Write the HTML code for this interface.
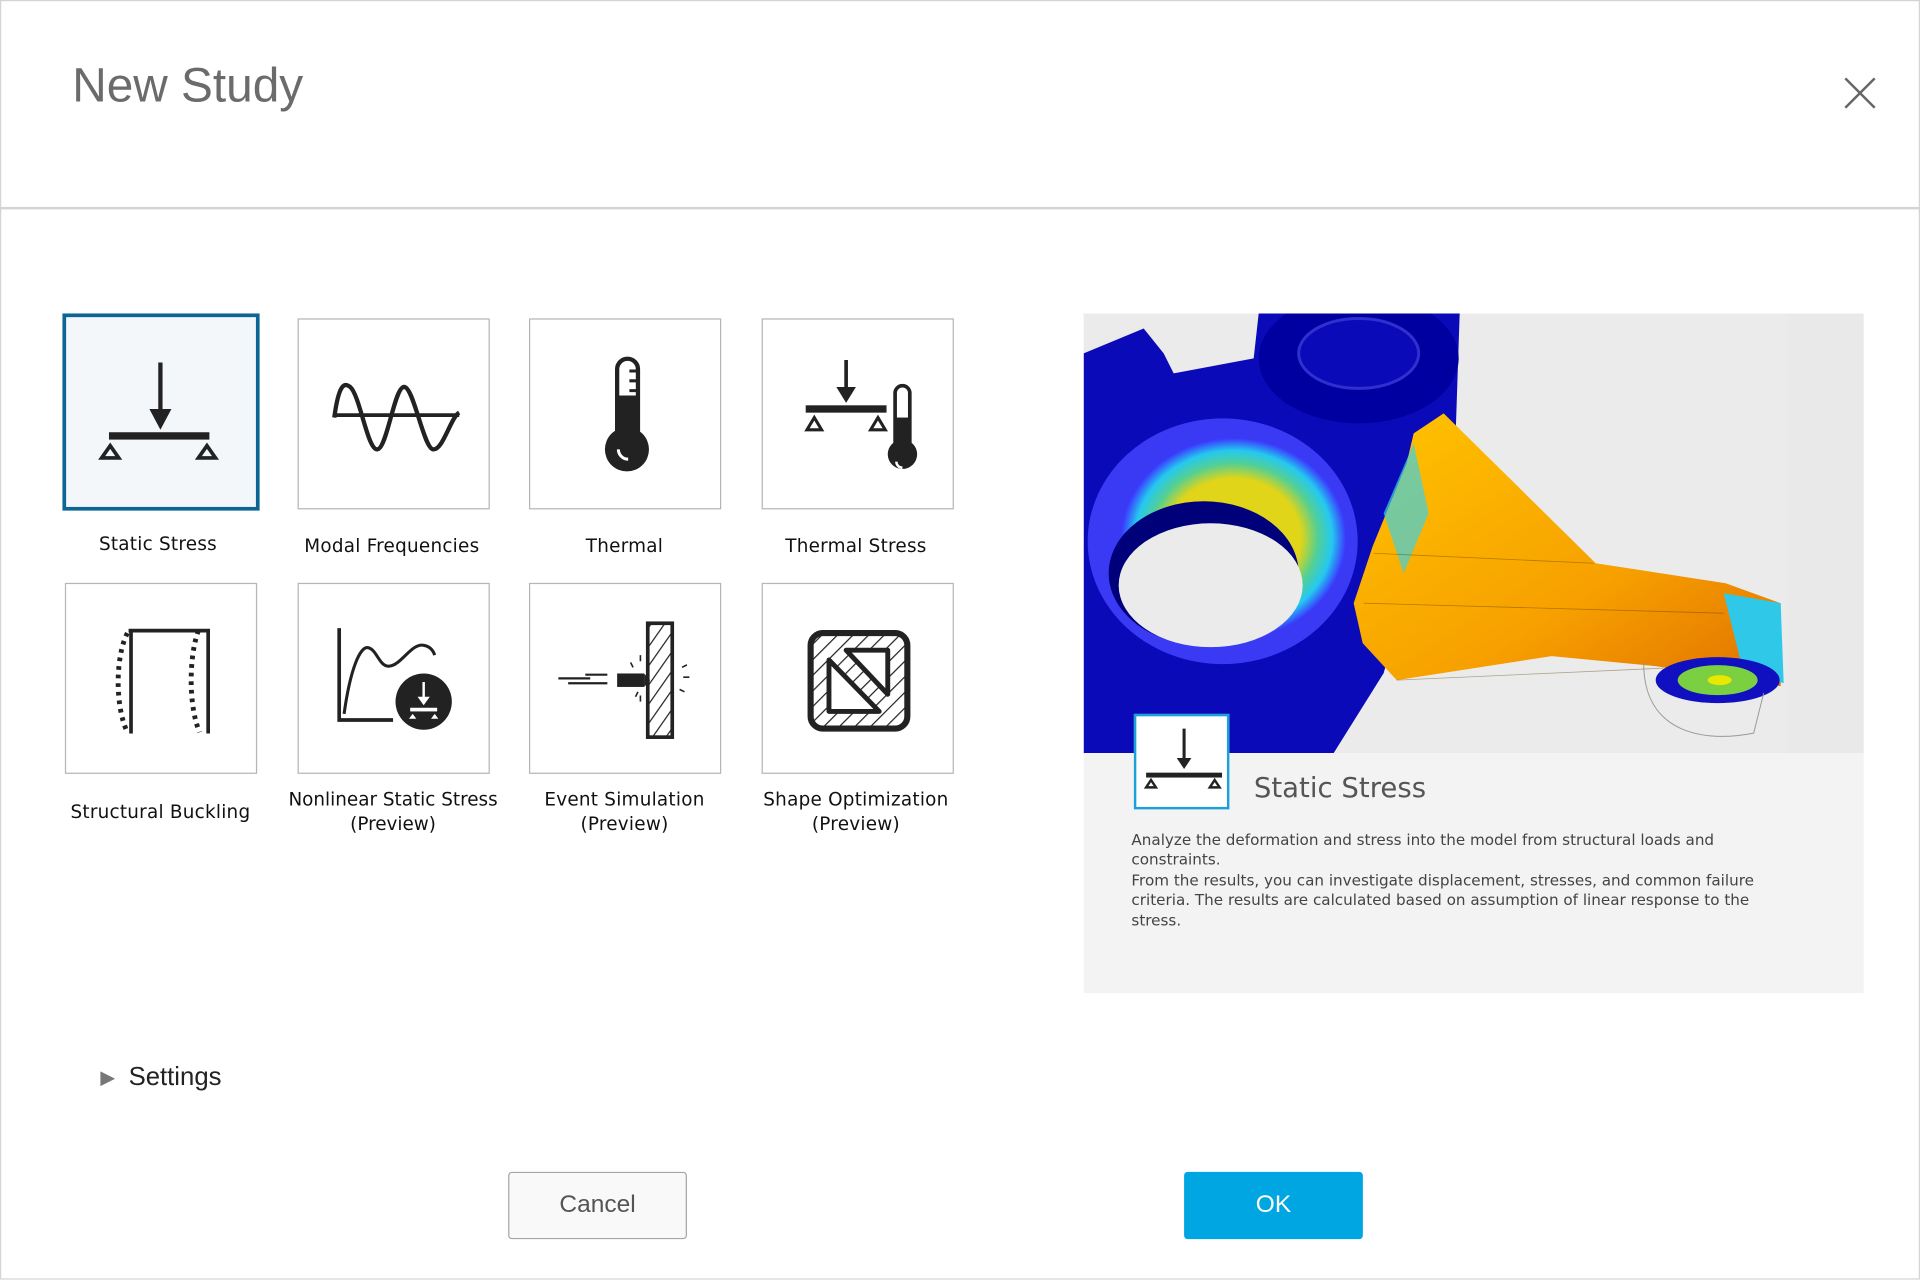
<!DOCTYPE html>
<html><head><meta charset="utf-8"><style>
html,body{margin:0;padding:0;background:#fff;overflow:hidden}
#root{position:absolute;left:0;top:0;width:1568px;height:1045px;transform:scale(1.22449);transform-origin:0 0;font-family:"Liberation Sans",sans-serif;}
.abs{position:absolute}
.tile{position:absolute;width:157px;height:156px;border:1px solid #b9b4b6;background:#fff;box-sizing:border-box}
.tile svg{position:absolute;left:0;top:0}
.lbl{position:absolute;width:200px;text-align:center;color:#111;line-height:20px;font-family:"DejaVu Sans","Liberation Sans",sans-serif;font-size:15px;letter-spacing:0.2px}
</style></head><body><div id="root">
<div class="abs" style="left:0;top:0;width:1566px;height:1043px;border:1.5px solid #d4d4d4"></div>
<div class="abs" style="left:0;top:169px;width:1568px;height:1.5px;background:#d4d4d4"></div>
<div class="abs" style="left:59px;top:47px;font-size:39px;color:#6b6b6b;line-height:48px">New Study</div>
<svg class="abs" style="left:1505px;top:62px" width="28" height="28" viewBox="0 0 28 28"><path d="M2 2L26 26M26 2L2 26" stroke="#666" stroke-width="2"/></svg>

<div class="tile" style="left:51px;top:256px;width:161px;height:161px;border:3.5px solid #0b6595;background:#f4f7fa">
<svg width="159" height="159" viewBox="3 3 159 159"><g fill="#222" stroke="#222">
<path d="M80 40V86" stroke-width="3.5"/><path d="M71 78h18l-9 17z" stroke="none"/>
<rect x="38" y="97" width="82" height="6" stroke="none"/>
<path d="M39 108l7 10h-14z" fill="none" stroke-width="3"/><path d="M118 108l7 10h-14z" fill="none" stroke-width="3"/></g></svg></div>
<div class="tile" style="left:243px;top:260px">
<svg width="157" height="156" viewBox="0 0 157 156"><path d="M29 78h102" stroke="#222" stroke-width="3"/><path d="M29 80C33 50 38 52 42 55C50 62 56 106 64 106C72 106 78 55 86 55C94 55 102 106 110 106C118 106 124 80 131 76" fill="none" stroke="#222" stroke-width="3.5"/></svg></div>
<div class="tile" style="left:432px;top:260px">
<svg width="157" height="156" viewBox="0 0 157 156"><rect x="71" y="32" width="17" height="70" rx="8.5" fill="#fff" stroke="#222" stroke-width="3.5"/><rect x="71" y="62" width="17" height="40" fill="#222"/><circle cx="79" cy="106" r="18" fill="#222"/><path d="M81 42h6M81 50h6M81 58h6" stroke="#222" stroke-width="2.5"/><path d="M72 106a8 8 0 0 0 8 8" stroke="#fff" stroke-width="2.5" fill="none"/></svg></div>
<div class="tile" style="left:622px;top:260px">
<svg width="157" height="156" viewBox="0 0 157 156"><g fill="#222" stroke="#222"><path d="M68 33V60" stroke-width="3"/><path d="M60 55h16l-8 13z" stroke="none"/><rect x="35" y="70" width="66" height="6" stroke="none"/><path d="M42 80l6 10h-12z" fill="none" stroke-width="2.5"/><path d="M94 80l6 10h-12z" fill="none" stroke-width="2.5"/>
<rect x="108" y="54" width="12" height="54" rx="6" fill="#fff" stroke-width="3"/><rect x="108" y="80" width="12" height="28" stroke="none"/><circle cx="114" cy="110" r="12" stroke="none"/></g><path d="M109 116a5 5 0 0 0 5 5" stroke="#fff" stroke-width="2" fill="none"/></svg></div>

<div class="lbl" style="left:29px;top:434px">Static Stress</div>
<div class="lbl" style="left:220px;top:436px">Modal Frequencies</div>
<div class="lbl" style="left:410px;top:436px">Thermal</div>
<div class="lbl" style="left:599px;top:436px">Thermal Stress</div>

<div class="tile" style="left:53px;top:476px">
<svg width="157" height="156" viewBox="0 0 157 156"><path d="M53 38V122M51 38H116V122" fill="none" stroke="#222" stroke-width="3"/><path d="M50 40C40 60 40 100 50 121" fill="none" stroke="#222" stroke-width="4" stroke-dasharray="3 4"/><path d="M108 38C100 60 100 100 109 121" fill="none" stroke="#222" stroke-width="4" stroke-dasharray="3 4"/></svg></div>
<div class="tile" style="left:243px;top:476px">
<svg width="157" height="156" viewBox="0 0 157 156"><path d="M33 36V111H77" fill="none" stroke="#222" stroke-width="3"/><path d="M37 106C42 70 50 50 57 52C64 54 66 68 74 67C84 66 92 48 102 50C108 51 110 55 111 58" fill="none" stroke="#222" stroke-width="2.5"/><circle cx="102" cy="96" r="23" fill="#222"/><path d="M102 80V96" stroke="#fff" stroke-width="2"/><path d="M97 92h10l-5 7z" fill="#fff"/><rect x="91" y="101" width="22" height="3" fill="#fff"/><path d="M93 106l3 4h-6zM111 106l3 4h-6z" fill="#fff"/></svg></div>
<div class="tile" style="left:432px;top:476px">
<svg width="157" height="156" viewBox="0 0 157 156"><defs><pattern id="h" width="9" height="9" patternUnits="userSpaceOnUse" patternTransform="rotate(35)"><rect width="9" height="9" fill="#fff"/><path d="M0 0V9" stroke="#222" stroke-width="2"/></pattern></defs><rect x="96" y="32" width="20" height="93" fill="url(#h)" stroke="#222" stroke-width="3"/><rect x="71" y="73" width="22" height="11" fill="#222"/><path d="M93 73l5 5.5-5 5.5z" fill="#222"/><path d="M23 77h26M31 81h32M45 74h18" stroke="#222" stroke-width="1.8"/><path d="M82 64l2 4M90 58v5M86 92l2-4M90 96v-5M124 68l4-2M122 86l4 2M125 76h5" stroke="#222" stroke-width="1.3"/></svg></div>
<div class="tile" style="left:622px;top:476px">
<svg width="157" height="156" viewBox="0 0 157 156"><defs><pattern id="h2" width="9" height="9" patternUnits="userSpaceOnUse" patternTransform="rotate(45)"><rect width="9" height="9" fill="#fff"/><path d="M0 0V9" stroke="#222" stroke-width="2"/></pattern></defs><rect x="39" y="40" width="79" height="78" rx="10" fill="url(#h2)" stroke="#222" stroke-width="5"/><path d="M54 62V104h41z" fill="#fff" stroke="#222" stroke-width="4" stroke-linejoin="round"/><path d="M68 54h34V90z" fill="#fff" stroke="#222" stroke-width="4" stroke-linejoin="round"/></svg></div>

<div class="lbl" style="left:31px;top:653px">Structural Buckling</div>
<div class="abs" style="left:236px;top:643px;width:170px;overflow:hidden;white-space:nowrap;text-align:center;font-family:'DejaVu Sans','Liberation Sans',sans-serif;font-size:15px;line-height:20px;color:#111"><div style="margin-left:-15px;width:200px">Nonlinear Static Stress</div><div>(Preview)</div></div>
<div class="lbl" style="left:410px;top:643px">Event Simulation<br>(Preview)</div>
<div class="lbl" style="left:599px;top:643px">Shape Optimization<br>(Preview)</div>

<div class="abs" style="left:885px;top:256px;width:637px;height:555px;background:#f3f3f3"></div>
<svg class="abs" style="left:885px;top:256px" width="637" height="359" viewBox="0 0 780 440" preserveAspectRatio="none">
<defs><radialGradient id="rg" cx="0.5" cy="0.5" r="0.5"><stop offset="0.6" stop-color="#f2e600"/><stop offset="0.75" stop-color="#55e08a"/><stop offset="0.88" stop-color="#22d8f0"/><stop offset="1" stop-color="#3a3aff"/></radialGradient>
<linearGradient id="og" x1="0" y1="0" x2="1" y2="1"><stop offset="0" stop-color="#ffc400"/><stop offset="0.6" stop-color="#f7a000"/><stop offset="1" stop-color="#e07000"/></linearGradient></defs>
<rect width="780" height="440" fill="#ebebeb"/><rect x="704" width="76" height="440" fill="#e9e9e9"/>
<path d="M0 40L60 15L80 40L90 60L170 45L175 0H376L372 120L360 150L330 250L300 360L250 440H0Z" fill="#0a0ab8"/>
<ellipse cx="275" cy="45" rx="100" ry="65" fill="#0000a0"/>
<ellipse cx="275" cy="40" rx="60" ry="35" fill="#0a0ab8" stroke="#3030d0" stroke-width="3"/>
<ellipse cx="139" cy="228" rx="135" ry="123" fill="#3a3af5"/>
<ellipse cx="150" cy="225" rx="112" ry="100" fill="url(#rg)" opacity="0.9"/>
<ellipse cx="120" cy="260" rx="95" ry="72" fill="#00007a"/>
<ellipse cx="127" cy="272" rx="92" ry="62" fill="#ebebeb"/>
<path d="M330 120L360 100L512 250L642 270L697 290L697 373L572 353L468 343L313 367L279 330L270 290L289 233L323 150Z" fill="url(#og)"/>
<path d="M300 200L330 130L345 200L320 260Z" fill="#40d0e0" opacity="0.7"/>
<path d="M640 280L697 290L700 370L660 360Z" fill="#30c8e8"/>
<ellipse cx="634" cy="367" rx="62" ry="23" fill="#1010c0"/><ellipse cx="634" cy="367" rx="40" ry="15" fill="#7ad040"/><ellipse cx="636" cy="367" rx="12" ry="5" fill="#e8e800"/>
<path d="M290 240L510 250M280 290L640 300M313 367L580 355" stroke="#553300" stroke-width="0.8" opacity="0.4" fill="none"/>
<path d="M560 350C560 420 620 430 670 420L680 380" stroke="#999" stroke-width="1" fill="none"/>
</svg>
<div class="abs" style="left:926px;top:583px;width:74px;height:74px;border:2px solid #1ba0dc;background:#fff">
<svg width="74" height="74" viewBox="0 0 74 74"><path d="M39 10V38" stroke="#222" stroke-width="2.5"/><path d="M33 34h12l-6 9z" fill="#222"/><rect x="8" y="46" width="62" height="4" fill="#222"/><path d="M12 52l4 6h-8zM64 52l4 6h-8z" fill="none" stroke="#222" stroke-width="2"/></svg></div>
<div class="abs" style="left:1024px;top:629px;font-size:22.5px;color:#555;font-family:'DejaVu Sans','Liberation Sans',sans-serif;line-height:30px">Static Stress</div>
<div class="abs" style="left:924px;top:678px;width:540px;font-size:12.4px;line-height:16.4px;color:#444;font-family:'DejaVu Sans','Liberation Sans',sans-serif">Analyze the deformation and stress into the model from structural loads and constraints.<br>From the results, you can investigate displacement, stresses, and common failure criteria. The results are calculated based on assumption of linear response to the stress.</div>

<svg class="abs" style="left:81px;top:873px" width="14" height="16"><path d="M1 2L13 8L1 14Z" fill="#777"/></svg>
<div class="abs" style="left:105px;top:867px;font-size:21px;color:#222;line-height:26px">Settings</div>

<div class="abs" style="left:415px;top:957px;width:144px;height:53px;border:1.5px solid #a5a5a5;border-radius:3px;background:#f9f9f9;text-align:center;line-height:53px;font-size:20px;color:#555">Cancel</div>
<div class="abs" style="left:967px;top:957px;width:146px;height:55px;border-radius:3px;background:#00a6e2;text-align:center;line-height:55px;font-size:20px;color:#fff">OK</div>
</div></body></html>
